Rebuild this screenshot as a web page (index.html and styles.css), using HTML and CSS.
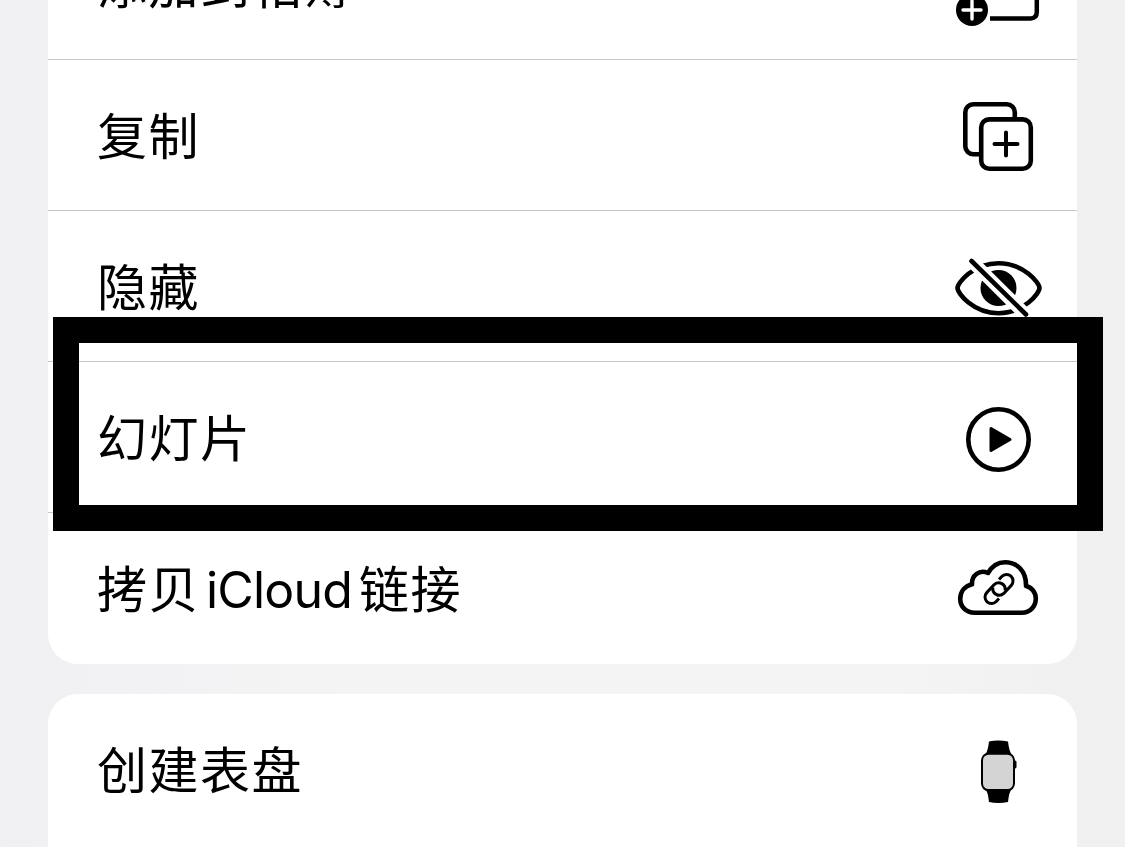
FILE: index.html
```
<!DOCTYPE html>
<html lang="zh-CN">
<head>
    <meta charset="UTF-8">
    <meta name="viewport" content="width=device-width, initial-scale=1.0">
    <title>共享</title>
    <link rel="stylesheet" href="styles.css">
</head>
<body>
    <main class="sheet">
        <ul class="group">
            <li class="row">
                <span class="label">添加到相簿</span>
                <svg class="icon" viewBox="0 0 100 100">
                    <path d="M42 84.4H82.5Q88.8 84.4 88.8 78V30H22V56" stroke-width="4.5" stroke-linecap="butt"/>
                    <circle cx="24" cy="76" r="16" class="solid"/>
                    <path d="M24 67V85M15 76H33" class="knockout"/>
                </svg>
            </li>
            <li class="row">
                <span class="label">复制</span>
                <svg class="icon" viewBox="0 0 100 100">
                    <rect x="17.3" y="19.2" width="49.5" height="50" rx="8"/>
                    <rect x="33.2" y="34.4" width="49.6" height="49.4" rx="8" class="paper"/>
                    <path d="M58 47.5V70.5M46.5 59H69.5" stroke-width="4"/>
                </svg>
            </li>
            <li class="row">
                <span class="label">隐藏</span>
                <svg class="icon" viewBox="0 0 100 100">
                    <path d="M9.5 52C9.5 47 25 27.2 50.5 27.2S91.5 47 91.5 52S76 77.2 50.5 77.2S9.5 57 9.5 52Z"/>
                    <circle cx="50.5" cy="52" r="18" class="solid"/>
                    <path d="M23 24.5L78 79" class="gap"/>
                    <path d="M23.5 25L78 78.5"/>
                </svg>
            </li>
            <li class="row">
                <span class="label">幻灯片</span>
                <svg class="icon" viewBox="0 0 100 100">
                    <circle cx="50.5" cy="52.5" r="30.2"/>
                    <path d="M43 41.5L62 52.5L43 63.5Z" class="play"/>
                </svg>
            </li>
            <li class="row">
                <span class="label">拷贝<span class="latin">iCloud</span>链接</span>
                <svg class="icon" viewBox="0 0 100 100">
                    <path d="M26.5 74.7C18 74.7 12.2 68.5 12.2 61C12.2 53.5 17 48 24 46.3C23.5 38 31 31 40 35C44 28 50 24.2 57 24.2C69 24.2 78.5 33 78 48C83.5 49 87.8 54.5 87.8 60.5C87.8 68.5 82 74.7 74 74.7Z"/>
                    <g class="link" transform="rotate(-47 51 51)">
                        <path d="M44 57.5H40A6.5 6.5 0 0 1 40 44.5H51A6.5 6.5 0 0 1 54 56.5"/>
                        <path d="M58 44.5H62A6.5 6.5 0 0 1 62 57.5H51A6.5 6.5 0 0 1 48 45.5"/>
                    </g>
                </svg>
            </li>
        </ul>

        <ul class="group">
            <li class="row">
                <span class="label">创建表盘</span>
                <svg class="icon" viewBox="0 0 100 100">
                    <path d="M41 22.5Q50 20.5 60 22.5Q61 32 64 36H37Q40 32 41 22.5Z" class="solid"/>
                    <path d="M41 83Q50 85 60 83Q61 73 64 69H37Q40 73 41 83Z" class="solid"/>
                    <rect x="64" y="41.5" width="4.5" height="8" rx="1.5" class="solid"/>
                    <rect x="34" y="34.7" width="32" height="36.4" rx="6.5" class="watch-face"/>
                </svg>
            </li>
        </ul>

        <div class="marker"></div>
    </main>
</body>
</html>
```
FILE: styles.css
```
body {
    margin: 0;
    height: 847px;
    overflow: hidden;
    background: linear-gradient(to right, #f0f0f3, #f4f4f5 30%, #f4f4f5 80%, #f0f0f0 96%);
    font-family: Inter, "Noto Sans CJK SC", sans-serif;
    color: #000;
}
.sheet {
    position: relative;
    height: 847px;
    overflow: hidden;
    display: flex;
    flex-direction: column;
    gap: 30px;
    padding: 0 48px;
}
.group {
    flex: none;
    margin: 0;
    padding: 0;
    list-style: none;
    background: #fff;
    border-radius: 30px;
}
/* the list is scrolled part way through its first row */
.group:first-child {
    margin-top: -91px;
}
.group:nth-child(2) {
    padding-bottom: 60px;
}
.row {
    display: flex;
    align-items: center;
    justify-content: space-between;
    box-sizing: border-box;
    height: 151px;
    padding: 0 29px 0 49px;
    border-bottom: 1px solid #c8c8cc;
}
.row:last-child {
    border-bottom-color: transparent;
}
.label {
    padding-top: 3px;
    font-size: 50px;
    line-height: 60px;
    letter-spacing: 1.5px;
    white-space: nowrap;
}
.latin {
    margin: 0 7px 0 6px;
    letter-spacing: -0.8px;
}
.icon {
    width: 100px;
    height: 100px;
    fill: none;
    stroke: #000;
    stroke-width: 4.6;
    stroke-linecap: round;
    stroke-linejoin: round;
}
.icon .solid {
    fill: #000;
    stroke: none;
}
.icon .paper {
    fill: #fff;
}
.icon .knockout {
    stroke: #fff;
    stroke-width: 3.4;
}
.icon .gap {
    stroke: #fff;
    stroke-width: 13;
}
.icon .play {
    fill: #000;
    stroke-width: 3;
}
.icon .link {
    stroke-width: 3;
    stroke-linecap: butt;
}
.icon .watch-face {
    fill: #d4d4d4;
    stroke-width: 2;
}
/* thick frame drawn round the slideshow row */
.marker {
    position: absolute;
    left: 53px;
    top: 317px;
    box-sizing: border-box;
    width: 1050px;
    height: 214px;
    border: 26px solid #000;
}
```
